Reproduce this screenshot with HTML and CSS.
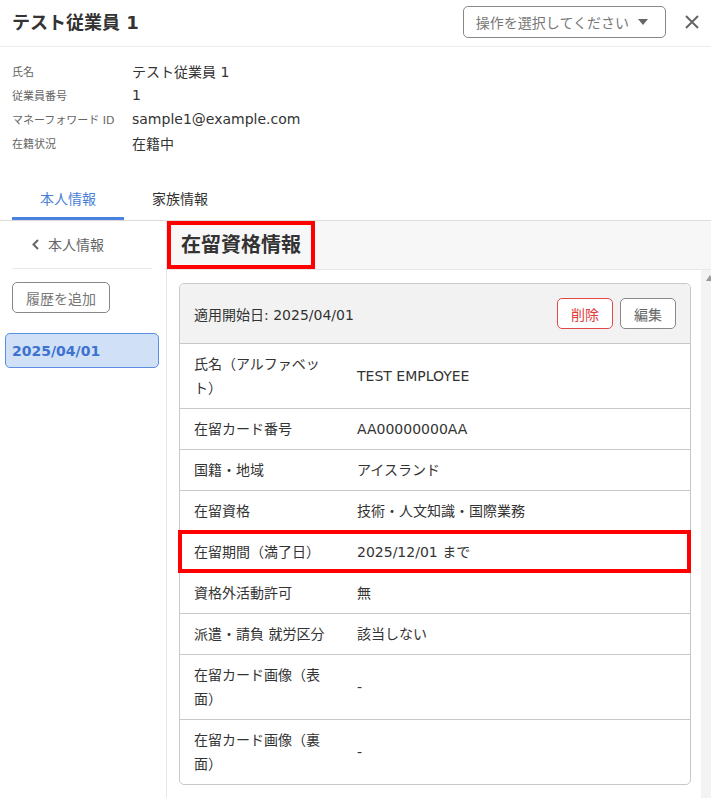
FILE: index.html
```html
<!DOCTYPE html>
<html lang="ja">
<head>
<meta charset="utf-8">
<title>テスト従業員 1</title>
<link rel="stylesheet" href="styles.css">
</head>
<body>
<div class="page">
  <header class="header">
    <h1 class="title">テスト従業員 1</h1>
    <div class="header-actions">
      <button class="select">操作を選択してください<svg class="caret" width="10" height="6" viewBox="0 0 10 6"><polygon points="0,0 10,0 5,6" fill="#666"/></svg></button>
      <svg class="close" width="14" height="14" viewBox="0 0 14 14"><path d="M1 1 L13 13 M13 1 L1 13" stroke="#666" stroke-width="2" fill="none"/></svg>
    </div>
  </header>

  <dl class="info">
    <dt>氏名</dt><dd>テスト従業員 1</dd>
    <dt>従業員番号</dt><dd>1</dd>
    <dt>マネーフォワード ID</dt><dd>sample1@example.com</dd>
    <dt>在籍状況</dt><dd>在籍中</dd>
  </dl>

  <nav class="tabs">
    <div class="tab active">本人情報</div>
    <div class="tab">家族情報</div>
  </nav>

  <div class="body">
    <aside class="sidebar">
      <div class="back"><svg class="chev" width="7" height="11" viewBox="0 0 7 11"><polyline points="6,1 1.5,5.5 6,10" stroke="#666" stroke-width="2" fill="none"/></svg>本人情報</div>
      <button class="add">履歴を追加</button>
      <div class="date-item">2025/04/01</div>
    </aside>
    <main class="main">
      <div class="heading-band"><h2 class="heading">在留資格情報</h2></div>
      <div class="main-row">
        <div class="content">
          <section class="card">
            <div class="card-head">
              <span>適用開始日: 2025/04/01</span>
              <div class="btns">
                <button class="btn danger">削除</button>
                <button class="btn">編集</button>
              </div>
            </div>
            <div class="row"><div class="k">氏名（アルファベット）</div><div class="v">TEST EMPLOYEE</div></div>
            <div class="row"><div class="k">在留カード番号</div><div class="v">AA00000000AA</div></div>
            <div class="row"><div class="k">国籍・地域</div><div class="v">アイスランド</div></div>
            <div class="row"><div class="k">在留資格</div><div class="v">技術・人文知識・国際業務</div></div>
            <div class="row marked"><div class="k">在留期間（満了日）</div><div class="v">2025/12/01 まで</div></div>
            <div class="row"><div class="k">資格外活動許可</div><div class="v">無</div></div>
            <div class="row"><div class="k">派遣・請負 就労区分</div><div class="v">該当しない</div></div>
            <div class="row"><div class="k">在留カード画像（表面）</div><div class="v">-</div></div>
            <div class="row"><div class="k">在留カード画像（裏面）</div><div class="v">-</div></div>
          </section>
        </div>
        <div class="scrollbar"><span class="arrow"></span></div>
      </div>
    </main>
  </div>
</div>
</body>
</html>
```

FILE: styles.css
```css
* { box-sizing: border-box; }
html, body { margin: 0; padding: 0; background: #fff; }
body {
  font-family: "DejaVu Sans", "Noto Sans CJK JP", sans-serif;
  color: #333;
  font-size: 14px;
  width: 711px;
  height: 798px;
  overflow: hidden;
}
button { font-family: inherit; background: #fff; cursor: pointer; }

.header {
  height: 47px;
  border-bottom: 1px solid #ececec;
  display: flex;
  align-items: center;
  justify-content: space-between;
  padding: 0 12px;
}
.title { margin: 0; font-size: 18px; font-weight: 700; line-height: 24px; color: #333; }
.header-actions { display: flex; align-items: center; gap: 19px; margin-top: -2px; }
.select {
  height: 32px;
  border: 1px solid #888;
  border-radius: 5px;
  padding: 0 17px 0 12px;
  font-size: 14px;
  color: #777;
  display: flex;
  align-items: center;
  gap: 9px;
}
.caret { display: block; }
.close { display: block; }

.info {
  margin: 0;
  padding: 12px 12px 23px;
  display: grid;
  grid-template-columns: 120px 1fr;
  grid-auto-rows: 24px;
  align-items: center;
}
.info dt { font-size: 11px; color: #666; }
.info dd { margin: 0; font-size: 14px; color: #333; }

.tabs {
  display: flex;
  padding: 0 12px;
  border-bottom: 1px solid #dcdcdc;
}
.tab {
  padding: 11px 28px 7px;
  line-height: 21px;
  border-bottom: 3px solid transparent;
  color: #333;
}
.tab.active { color: #4a7fd8; border-bottom-color: #4a80e0; }

.body { display: flex; height: 578px; }
.sidebar {
  width: 167px;
  flex: none;
  border-right: 1px solid #e6e6e6;
  padding: 0 14px 0 12px;
}
.back {
  height: 49px;
  border-bottom: 1px solid #e8e8e8;
  display: flex;
  align-items: center;
  padding-left: 20px;
  gap: 9px;
  color: #666;
  margin-top: -1px;
}
.chev { display: block; }
.add {
  margin-top: 13px;
  height: 31px;
  border: 1px solid #888;
  border-radius: 5px;
  padding: 0 13px;
  font-size: 14px;
  color: #777;
}
.date-item {
  margin: 20px -7px 0 -7px;
  height: 35px;
  background: #cfe0f7;
  border: 1px solid #5b8ee0;
  border-radius: 5px;
  display: flex;
  align-items: center;
  padding-left: 6px;
  font-weight: 700;
  color: #3d72d0;
}

.main { flex: 1; display: flex; flex-direction: column; min-width: 0; }
.heading-band {
  height: 49px;
  background: #f7f7f7;
  border-bottom: 1px solid #e8e8e8;
  flex: none;
}
.heading {
  display: inline-block;
  margin: 0;
  height: 48px;
  border: 4px solid #f00;
  padding: 0 10px 0 10px;
  font-size: 20px;
  font-weight: 700;
  line-height: 40px;
  color: #333;
}
.main-row { flex: 1; display: flex; }
.content { flex: 1; padding: 13px 10px 0 12px; }
.scrollbar { width: 10px; background: #f3f3f3; padding-top: 5px; flex: none; }
.arrow {
  display: block;
  width: 0; height: 0;
  margin-left: 5px;
  border-left: 4px solid transparent;
  border-right: 4px solid transparent;
  border-bottom: 6px solid #999;
}

.card {
  border: 1px solid #c8c8c8;
  border-radius: 5px;
  background: #fff;
}
.card-head {
  height: 60px;
  background: #f2f2f2;
  border-bottom: 1px solid #c8c8c8;
  border-radius: 5px 5px 0 0;
  display: flex;
  align-items: center;
  justify-content: space-between;
  padding: 0 14px;
}
.btns { display: flex; gap: 7px; }
.btn {
  height: 31px;
  border: 1px solid #888;
  border-radius: 5px;
  padding: 0 13px;
  font-size: 14px;
  color: #666;
}
.btn.danger { border-color: #e04848; color: #e03a3a; }

.row {
  display: grid;
  grid-template-columns: 163px 1fr;
  align-items: center;
  border-bottom: 1px solid #c8c8c8;
  position: relative;
}
.row:last-child { border-bottom: none; }
.row .k, .row .v { padding: 8px 14px; line-height: 24px; }
.row.marked::after {
  content: "";
  position: absolute;
  left: -2px; right: -1px; top: -2px; bottom: -1px;
  border: 4px solid #f00;
  pointer-events: none;
}
```
